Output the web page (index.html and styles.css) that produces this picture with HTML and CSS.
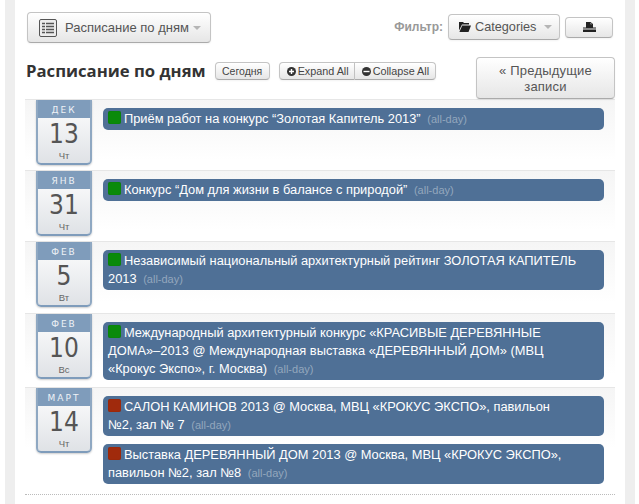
FILE: index.html
```html
<!DOCTYPE html>
<html lang="ru">
<head>
  <meta charset="UTF-8">
  <meta name="viewport" content="width=device-width, initial-scale=1">
  <title>Расписание по дням</title>
  <link rel="stylesheet" href="styles.css">
</head>
<body>

<div class="wrap">
  <div class="inner">

    <!-- верхняя панель -->
    <div class="toolbar">
      <button class="btn view-btn">
        <svg class="view-icon" width="18" height="18" viewBox="0 0 18 18">
          <rect x="0.5" y="0.5" width="17" height="17" rx="1.5" fill="#ececec" stroke="#555" stroke-width="1"/>
          <path d="M3 4.5h3M7 4.5h8M3 7.5h3M7 7.5h8M3 10.5h3M7 10.5h8M3 13.5h3M7 13.5h8" stroke="#555" stroke-width="1.4"/>
        </svg>
        Расписание по дням <span class="caret"></span>
      </button>
      <div class="filters">
        <span class="filter-label">Фильтр:</span>
        <button class="btn cat-btn">
          <svg width="12" height="10" viewBox="0 0 12 10">
            <path d="M0 0h4l1 1h5v1.5H3L0 8.5zM3.2 3.5H12L9.5 10H0.4z" fill="#222"/>
          </svg>
          Categories <span class="caret"></span>
        </button>
        <button class="btn print-btn">
          <svg width="13" height="10" viewBox="0 0 13 10">
            <path d="M3 0h4.5L10 2v3.5H3zM7.5 1v1.2H9zM0 5.5h13v1H0zM0 7.5h13V10H0z" fill="#222" fill-rule="evenodd"/>
          </svg>
        </button>
      </div>
    </div>

    <!-- заголовок -->
    <div class="title-row">
      <h2>Расписание по дням</h2>
      <button class="btn small-btn today-btn">Сегодня</button>
      <div class="btn-group">
        <button class="btn small-btn">
          <svg width="9" height="9" viewBox="0 0 9 9"><circle cx="4.5" cy="4.5" r="4.5" fill="#333"/><path d="M2 4.5h5M4.5 2v5" stroke="#fff" stroke-width="1.4"/></svg>
          Expand All
        </button>
        <button class="btn small-btn">
          <svg width="9" height="9" viewBox="0 0 9 9"><circle cx="4.5" cy="4.5" r="4.5" fill="#333"/><path d="M1.5 4.5h6" stroke="#fff" stroke-width="1.4"/></svg>
          Collapse All
        </button>
      </div>
      <button class="btn prev-btn">« Предыдущие записи</button>
    </div>

    <!-- дни -->
    <div class="days">
      <div class="day">
        <div class="date">
          <div class="month">Дек</div>
          <div class="num">13</div>
          <div class="weekday">Чт</div>
        </div>
        <div class="events">
          <div class="event"><span class="dot green"></span>Приём работ на конкурс “Золотая Капитель 2013” <span class="allday">(all-day)</span></div>
        </div>
      </div>

      <div class="day">
        <div class="date">
          <div class="month">Янв</div>
          <div class="num">31</div>
          <div class="weekday">Чт</div>
        </div>
        <div class="events">
          <div class="event"><span class="dot green"></span>Конкурс “Дом для жизни в балансе с природой” <span class="allday">(all-day)</span></div>
        </div>
      </div>

      <div class="day">
        <div class="date">
          <div class="month">Фев</div>
          <div class="num">5</div>
          <div class="weekday">Вт</div>
        </div>
        <div class="events">
          <div class="event"><span class="dot green"></span>Независимый национальный архитектурный рейтинг ЗОЛОТАЯ КАПИТЕЛЬ 2013 <span class="allday">(all-day)</span></div>
        </div>
      </div>

      <div class="day">
        <div class="date">
          <div class="month">Фев</div>
          <div class="num">10</div>
          <div class="weekday">Вс</div>
        </div>
        <div class="events">
          <div class="event"><span class="dot green"></span>Международный архитектурный конкурс «КРАСИВЫЕ ДЕРЕВЯННЫЕ <span class="nowrap">ДОМА»–2013</span> @ Международная выставка «ДЕРЕВЯННЫЙ ДОМ» (МВЦ <span class="nowrap">«Крокус Экспо»,</span> г. Москва) <span class="allday">(all-day)</span></div>
        </div>
      </div>

      <div class="day">
        <div class="date">
          <div class="month">Март</div>
          <div class="num">14</div>
          <div class="weekday">Чт</div>
        </div>
        <div class="events">
          <div class="event"><span class="dot red"></span>САЛОН КАМИНОВ 2013 @ Москва, МВЦ «КРОКУС ЭКСПО», павильон <span class="nowrap">№2, зал № 7</span> <span class="allday">(all-day)</span></div>
          <div class="event"><span class="dot red"></span>Выставка ДЕРЕВЯННЫЙ ДОМ 2013 @ Москва, МВЦ «КРОКУС ЭКСПО», павильон №2, зал №8 <span class="allday">(all-day)</span></div>
        </div>
      </div>
    </div>

  </div>
</div>

</body>
</html>
```

FILE: styles.css
```css
html, body {
  height: 100%;
}
body {
  margin: 0;
  background: #fff;
  font-family: "Liberation Sans", Arial, sans-serif;
  font-size: 13px;
  color: #333;
  overflow: hidden;
}
.wrap {
  margin: 0 4px 0 5px;
  height: 100%;
  background: #fff;
  border-left: 10px solid #eee;
  border-right: 10px solid #eee;
}
.inner {
  padding: 12px 10px 0 10px;
}
.nowrap {
  white-space: nowrap;
}
.btn {
  font-family: "Liberation Sans", Arial, sans-serif;
  color: #333;
  background: linear-gradient(#fff, #e6e6e6);
  border: 1px solid #c4c4c4;
  border-bottom-color: #aaa;
  border-radius: 4px;
  box-shadow: inset 0 1px 0 #fff, 0 1px 2px rgba(0,0,0,0.05);
  padding: 0;
  display: inline-flex;
  align-items: center;
  justify-content: center;
}
.caret {
  display: inline-block;
  width: 0;
  height: 0;
  border-left: 4px solid transparent;
  border-right: 4px solid transparent;
  border-top: 4px solid #b5b5b5;
  margin-left: 4px;
}
.toolbar {
  display: flex;
  justify-content: space-between;
  align-items: flex-start;
  padding-left: 2px;
  padding-right: 2px;
}
.view-btn {
  width: 184px;
  height: 31px;
  font-size: 13px;
  color: #555;
  justify-content: flex-start;
  padding-left: 11px;
}
.view-icon {
  margin-right: 8px;
}
.filters {
  display: flex;
  align-items: center;
  margin-top: 2px;
}
.filter-label {
  font-size: 12px;
  font-weight: bold;
  color: #999;
  margin-right: 5px;
}
.cat-btn {
  width: 112px;
  height: 26px;
  font-size: 12.7px;
  gap: 4px;
  color: #555;
  justify-content: flex-start;
  padding-left: 10px;
}
.print-btn {
  width: 48px;
  height: 21px;
  margin-left: 5px;
}
.title-row {
  display: flex;
  align-items: flex-start;
  margin-top: 14px;
  height: 42px;
}
.title-row h2 {
  margin: 3px 9px 0 1px;
  font-family: "Open Sans", sans-serif;
  font-size: 16.7px;
  line-height: 22px;
  font-weight: bold;
  color: #333;
  white-space: nowrap;
}
.small-btn {
  height: 18px;
  padding: 0 5px 0 7px;
  font-size: 10.8px;
  gap: 2px;
  color: #444;
  margin-top: 5px;
  white-space: nowrap;
}
.today-btn {
  padding: 0 7px;
  width: 55px;
  font-size: 10.5px;
}
.btn-group {
  display: flex;
  margin-left: 9px;
}
.btn-group .small-btn:first-child {
  border-radius: 4px 0 0 4px;
}
.btn-group .small-btn:last-child {
  border-radius: 0 4px 4px 0;
  border-left: 0;
  padding-right: 6px;
}
.prev-btn {
  width: 139px;
  height: 42px;
  margin-left: auto;
  padding-top: 1px;
  font-size: 13px;
  line-height: 16px;
  letter-spacing: 0.2px;
  color: #555;
}
.day {
  display: flex;
  align-items: flex-start;
  border-top: 1px solid #e6e6e6;
  background: linear-gradient(#f5f5f5, #fff 60px);
  padding-bottom: 5.2px;
}
.date {
  flex: none;
  width: 56px;
  margin-left: 11px;
  border: 2px solid #8fa8c2;
  border-top: 0;
  border-bottom-color: #7f9cbb;
  border-radius: 0 0 5px 5px;
  box-sizing: border-box;
  height: 65px;
  overflow: hidden;
  background: linear-gradient(#fff, #dfe2e6);
  box-shadow: 0 1px 2px rgba(0,0,0,0.2);
  text-align: center;
}
.month {
  height: 18px;
  background: #7f9cbb;
  color: #eef2f6;
  font-family: "DejaVu Sans", sans-serif;
  font-size: 9px;
  line-height: 20px;
  letter-spacing: 2px;
  text-transform: uppercase;
}
.num {
  font-family: "DejaVu Sans Condensed", "DejaVu Sans", sans-serif;
  font-stretch: condensed;
  font-size: 26px;
  line-height: 29px;
  margin-top: 2px;
  color: #555;
}
.weekday {
  font-size: 9.5px;
  line-height: 11px;
  margin-top: 1px;
  color: #666;
}
.events {
  flex: 1;
  margin: 8px 11px 2px 11px;
  display: flex;
  flex-direction: column;
  gap: 8px;
}
.event {
  background: #4f7096;
  color: #fff;
  border-radius: 5px;
  padding: 2px 5px 2px 5px;
  line-height: 18px;
  font-size: 12.85px;
}
.dot {
  display: inline-block;
  width: 13px;
  height: 13px;
  border-radius: 2px;
  margin-right: 3px;
  vertical-align: -1px;
  box-shadow: inset 0 0 1px rgba(0,0,0,0.3);
}
.green {
  background: #0a8a0a;
}
.red {
  background: #a02a0c;
}
.allday {
  font-size: 11px;
  color: #93a7bd;
  margin-left: 3px;
}
.days {
  border-bottom: 1px dotted #bbb;
  padding-bottom: 3px;
}
```
